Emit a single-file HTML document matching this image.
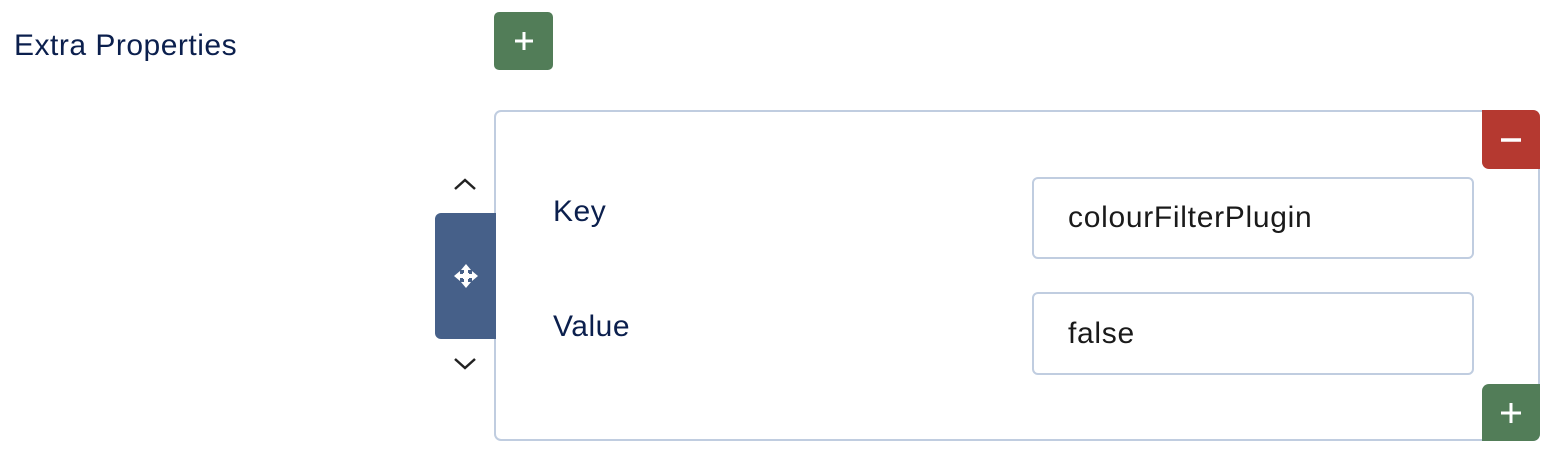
<!DOCTYPE html>
<html><head><style>
body{margin:0;width:1560px;height:466px;background:#fff;font-family:"Liberation Sans",sans-serif;position:relative;overflow:hidden}
.a{position:absolute}
.lbl{color:#0b1f4d;font-size:30px;letter-spacing:0.5px}
.btn{position:absolute;display:flex;align-items:center;justify-content:center;color:#fff}
.inp{position:absolute;border:2px solid #c0cde0;border-radius:6px;box-sizing:border-box;font-size:30px;letter-spacing:0.7px;color:#1a1a1a;padding-left:34px;display:flex;align-items:center}
</style></head><body>
<div class="a lbl" style="left:14px;top:29px">Extra Properties</div>
<div class="btn" style="left:494px;top:12px;width:59px;height:58px;background:#527d58;border-radius:5px">
<svg width="22" height="22"><path d="M11 2V20M2 11H20" stroke="#fff" stroke-width="3"/></svg></div>
<div class="a" style="left:494px;top:110px;width:1046px;height:331px;border:2px solid #c0cde0;border-radius:7px;box-sizing:border-box"></div>
<div class="btn" style="left:1482px;top:110px;width:58px;height:59px;background:#b53930;border-radius:0 7px 0 7px">
<svg width="22" height="6"><path d="M1 3H21" stroke="#fff" stroke-width="3.5"/></svg></div>
<div class="btn" style="left:1482px;top:384px;width:58px;height:57px;background:#527d58;border-radius:7px 0 7px 0">
<svg width="22" height="22"><path d="M11 1V21M1 11H21" stroke="#fff" stroke-width="3"/></svg></div>
<svg class="a" style="left:452px;top:176px" width="26" height="16"><path d="M3 13L13 4L23 13" stroke="#222" stroke-width="2.5" fill="none"/></svg>
<svg class="a" style="left:452px;top:356px" width="26" height="16"><path d="M3 3L13 12L23 3" stroke="#222" stroke-width="2.5" fill="none"/></svg>
<div class="btn" style="left:435px;top:213px;width:61px;height:126px;background:#466089;border-radius:6px 0 0 6px">
<svg width="28" height="28" viewBox="0 0 28 28"><path d="M14 2L19 8H16V12H12V8H9ZM14 26L9 20H12V16H16V20H19ZM2 14L8 9V12H12V16H8V19ZM26 14L20 19V16H16V12H20V9Z" fill="#fff"/><rect x="11" y="11" width="6" height="6" fill="#fff"/></svg></div>
<div class="a lbl" style="left:553px;top:195px">Key</div>
<div class="a lbl" style="left:553px;top:310px">Value</div>
<div class="inp" style="left:1032px;top:177px;width:442px;height:82px">colourFilterPlugin</div>
<div class="inp" style="left:1032px;top:292px;width:442px;height:83px">false</div>
</body></html>
